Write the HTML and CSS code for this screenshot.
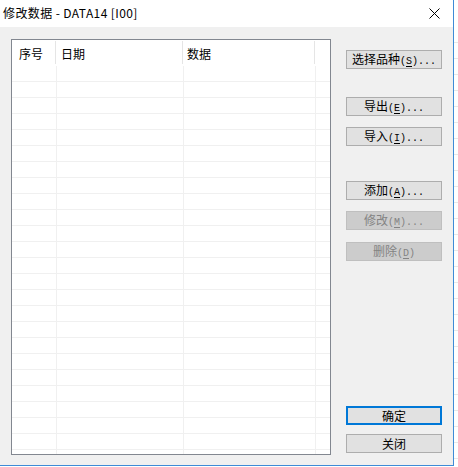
FILE: index.html
```html
<!DOCTYPE html>
<html>
  <head>
    <title>修改数据</title>
    <link rel="stylesheet" href="styles.css">
  </head>
  <body>
    <div class="dialog">
      <div class="titlebar">
        <span class="title">修改数据 - DATA14 [I00]</span>
        <span class="close">
          <svg width="11" height="11" viewBox="0 0 11 11">
            <path d="M0.5 0.5 L10.5 10.5 M10.5 0.5 L0.5 10.5" stroke="#000" stroke-width="1" fill="none" />
          </svg>
        </span>
      </div>
      <div class="client">
        <div class="listbox">
          <table class="grid" id="grid">
            <thead>
              <tr>
                <th class="c1">序号</th>
                <th class="c2">日期</th>
                <th class="c3">数据</th>
                <th class="c4"></th>
              </tr>
            </thead>
            <tbody id="rows"></tbody>
          </table>
        </div>
        <div class="buttons">
          <button class="btn b-select">选择品种<span class="k">(<u>S</u>)...</span></button>
          <button class="btn b-export">导出<span class="k">(<u>E</u>)...</span></button>
          <button class="btn b-import">导入<span class="k">(<u>I</u>)...</span></button>
          <button class="btn b-add">添加<span class="k">(<u>A</u>)...</span></button>
          <button class="btn b-edit" disabled>修改<span class="k">(<u>M</u>)...</span></button>
          <button class="btn b-del" disabled>删除<span class="k">(<u>D</u>)</span></button>
          <button class="btn b-ok default">确定</button>
          <button class="btn b-close">关闭</button>
        </div>
      </div>
    </div>
    <div class="behind"></div>

    <script>
      const rows = document.getElementById("rows");
      for (let i = 0; i < 25; i++) {
        const tr = document.createElement("tr");
        tr.innerHTML = "<td></td><td></td><td></td><td></td>";
        rows.appendChild(tr);
      }
    </script>
  </body>
</html>
```

FILE: styles.css
```css
body {
  margin: 0;
  width: 458px;
  height: 467px;
  overflow: hidden;
  background: #fff;
  font-family: "Noto Sans CJK SC", "Microsoft YaHei", sans-serif;
  font-size: 12px;
  display: flex;
}

.dialog {
  width: 453px;
  height: 465px;
  border-right: 1px solid #3f8bd6;
  border-bottom: 1px solid #3f8bd6;
  background: #f0f0f0;
  display: flex;
  flex-direction: column;
  flex-shrink: 0;
}

.behind {
  flex: 1;
  background: repeating-linear-gradient(to bottom, #fff 0, #fff 15px, #e8e8e8 15px, #e8e8e8 16px);
  border-top: 27px solid #fff;
}

.titlebar {
  height: 27px;
  background: #fff;
  display: flex;
  align-items: center;
  justify-content: space-between;
}
.title {
  padding-left: 3px;
  color: #000;
  font-size: 12px;
  letter-spacing: 0.4px;
  line-height: 16px;
  margin-top: -1px;
}
.close {
  width: 30px;
  display: flex;
  justify-content: center;
  margin-right: 4px;
  margin-top: -1px;
}

.client {
  flex: 1;
  display: flex;
  padding: 12px 0 0 11px;
}

.listbox {
  width: 318px;
  height: 414px;
  border: 1px solid #828790;
  background: #fff;
  overflow: hidden;
}

.grid {
  border-collapse: collapse;
  table-layout: fixed;
  width: 318px;
}
.grid th {
  height: 25px;
  padding: 2px 0 0 0;
  text-align: left;
  font-weight: normal;
  color: #000;
  font-size: 12px;
  position: relative;
  vertical-align: top;
  line-height: 24px;
  box-sizing: border-box;
}
.grid th::after {
  content: "";
  position: absolute;
  right: 0;
  top: 1px;
  bottom: 2px;
  width: 1px;
  background: #e5e5e5;
}
.grid th.c4::after {
  display: none;
}
.grid th.c1 { width: 44px; padding-left: 7px; }
.grid th.c2 { width: 127px; padding-left: 5px; }
.grid th.c3 { width: 132px; padding-left: 4px; }
.grid th.c4 { width: 15px; }

.grid td {
  height: 15px;
  padding: 0;
  border-bottom: 1px solid #f0f0f0;
  border-right: 1px solid #f0f0f0;
}
.grid td:last-child {
  border-right: 0;
}

.buttons {
  display: flex;
  flex-direction: column;
  padding-left: 15px;
  padding-top: 11px;
}

.btn {
  width: 96px;
  height: 19px;
  padding: 0;
  margin: 0;
  border: 1px solid #adadad;
  background: #e1e1e1;
  color: #000;
  font-family: "Noto Sans CJK SC", sans-serif;
  font-size: 12px;
  line-height: 16px;
}
.btn .k {
  font-family: "Liberation Mono", monospace;
  font-size: 10px;
}
.btn u {
  text-decoration-thickness: 1px;
  text-underline-offset: 2px;
}
.btn:disabled {
  background: #cccccc;
  border-color: #bfbfbf;
  color: #838383;
}
.btn.default {
  border: 2px solid #0078d7;
}

.b-export { margin-top: 28px; }
.b-import { margin-top: 11px; }
.b-add { margin-top: 35px; }
.b-edit { margin-top: 11px; }
.b-del { margin-top: 12px; }
.b-ok { margin-top: auto; }
.b-close { margin-top: 9px; margin-bottom: 12px; }
```
